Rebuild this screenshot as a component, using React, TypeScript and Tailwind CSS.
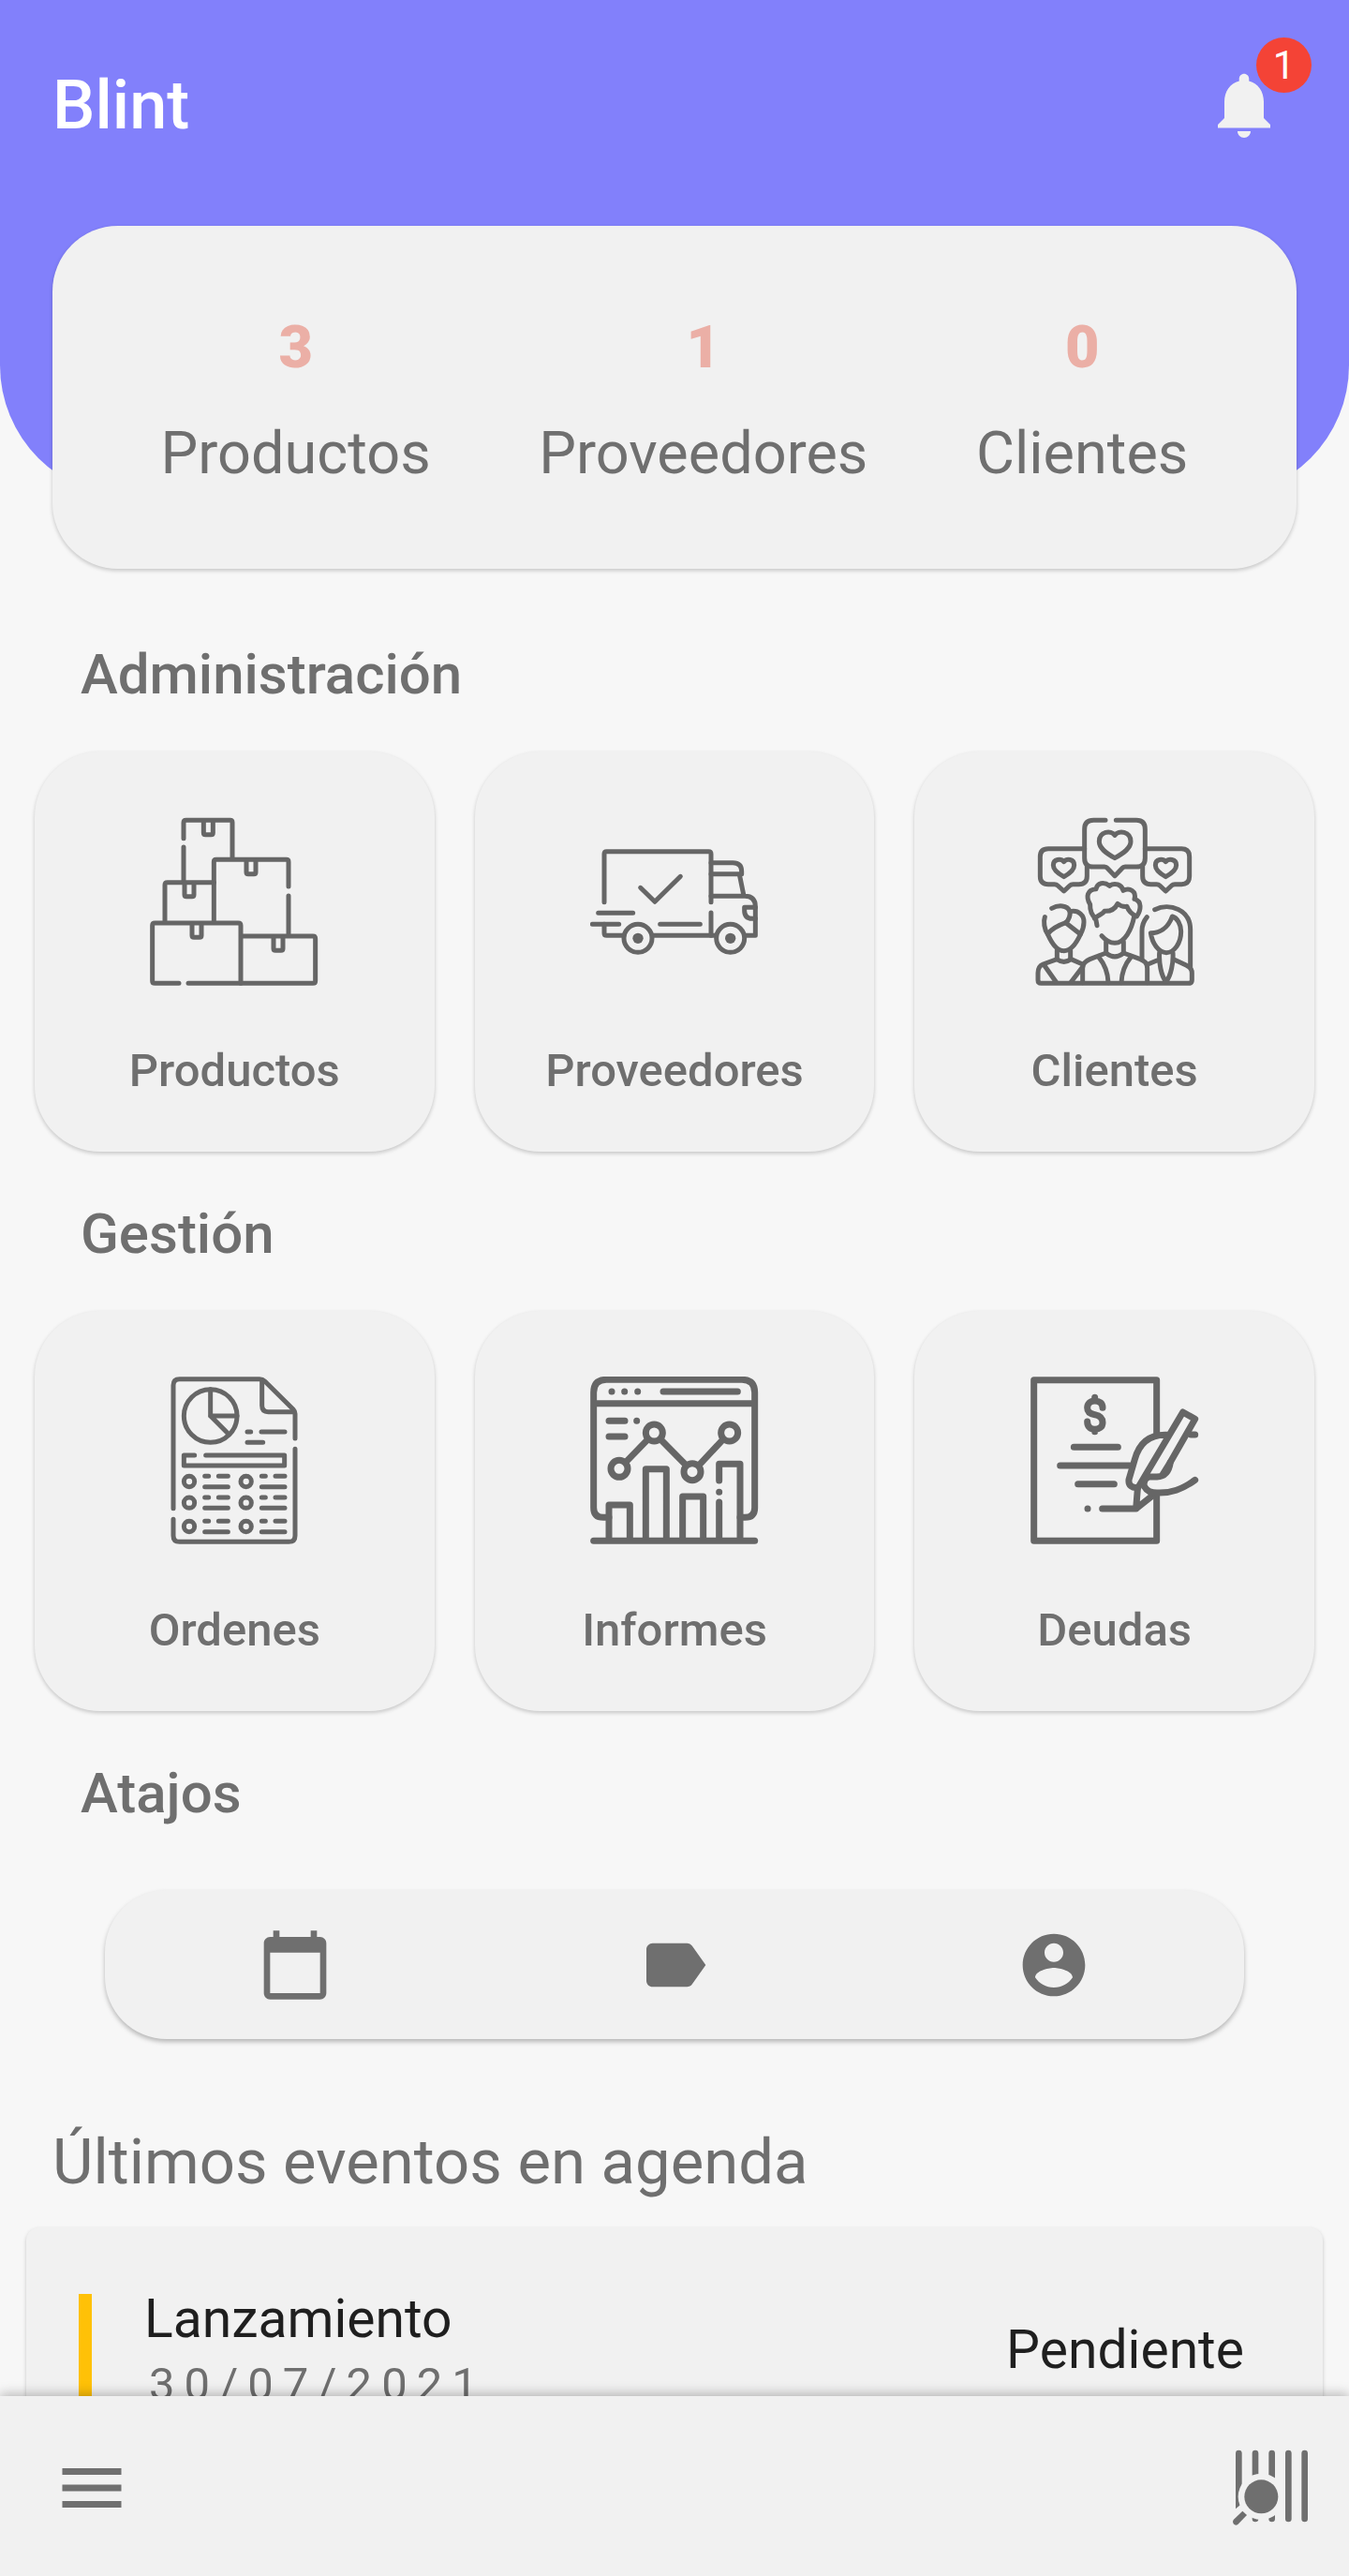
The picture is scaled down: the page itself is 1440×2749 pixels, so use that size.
import type { ReactNode } from "react";

type DrawingProps = { box: string; weight: number; children: ReactNode };

function Drawing({ box, weight, children }: DrawingProps) {
  return (
    <svg
      viewBox={box}
      className="size-[180px]"
      fill="none"
      stroke="#666666"
      strokeWidth={weight}
      strokeLinecap="round"
      strokeLinejoin="round"
      aria-hidden="true"
    >
      {children}
    </svg>
  );
}

function BoxesIcon() {
  return (
    <Drawing box="90 66 540 540" weight={15}>
      <path d="M198 134V84q0-8 8-8h141q7 0 7 7V195M198 162V275" />
      <path d="M295 398V209q0-7 7-7h225q7 0 7 7V288M534 318V440" />
      <path d="M138 398V283q0-8 8-8h149" />
      <path d="M183 598H106q-8 0-8-8V413q0-8 8-8h267q8 0 8 8V598" />
      <path d="M213 598H612q8 0 8-8V455q0-8-8-8H388" />
      <path d="M262 80v36q0 6 6 6h18q6 0 6-6V80" />
      <path d="M399 206v36q0 6 6 6h18q6 0 6-6V206" />
      <path d="M201 279v35q0 6 6 6h18q6 0 6-6V279" />
      <path d="M225 409v36q0 6 6 6h18q6 0 6-6V409" />
      <path d="M486 451v36q0 6 6 6h18q6 0 6-6V451" />
    </Drawing>
  );
}

function TruckIcon() {
  return (
    <Drawing box="60 66 540 540" weight={15}>
      <path d="M105 338V184q0-8 8-8H439q8 0 8 8V338M447 372V445" />
      <path d="M221 292L267 337L349 256" />
      <path d="M86 373H197M67 409H152M284 409H412" />
      <path d="M105 409v28q0 8 8 8h55M262 445H463" />
      <path d="M447 212h70q28 0 28 28v8H447" />
      <path d="M538 250L552 318M447 319h108q34 0 34 34V445H558" />
      <path d="M589 355h-35v10q0 25 25 26h10" />
      <circle cx="213" cy="454" r="45" />
      <circle cx="509" cy="454" r="45" />
      <circle cx="213" cy="454" r="17" fill="#666666" stroke="none" />
      <circle cx="509" cy="454" r="17" fill="#666666" stroke="none" />
    </Drawing>
  );
}

function ClientsIcon() {
  return (
    <Drawing box="60 66 540 540" weight={15}>
      <path d="M300 76H262q-29 0-29 29V197q0 28 28 28h36q6 0 10 5l23 24l23-24q4-5 10-5h36q28 0 28-28V105q0-29-28-29H334" />
      <path d="M233 167H117q-26 0-26 26V255q0 26 26 26h20q6 0 10 4l20 18l19-18q4-4 10-4h19q26 0 26-26V225" />
      <path d="M427 167H544q25 0 25 26V255q0 26-25 26h-22q-6 0-10 4l-19 18l-19-18q-4-4-10-4h-19q-26 0-26-26V225" />
      <path d="M330 197C300 180 280 165 280 144C280 112 318 106 330 124C342 106 381 112 381 144C381 165 360 180 330 197Z" />
      <path d="M167 257C145 245 133 235 133 220C133 199 158 198 167 209C176 198 200 199 200 220C200 235 189 245 167 257Z" />
      <path d="M493 257C471 245 460 235 460 220C460 199 484 198 493 209C502 198 527 199 527 220C527 235 515 245 493 257Z" />
      <path d="M273 413L269 391C259 382 250 365 251 346C236 320 242 298 270 296C274 276 295 272 313 286C330 274 352 282 357 301C378 290 400 304 393 328C417 335 415 362 400 384C382 376 374 366 369 352Q352 354 339 343C332 358 318 368 297 367C290 378 278 378 265 391" />
      <path d="M288 446C302 462 316 469 330 469C362 469 384 425 392 384" />
      <path d="M302 466V501M358 466V501" />
      <path d="M227 596V550C227 534 238 526 250 521L302 501Q330 524 358 501L412 521C425 527 434 532 434 550V596" />
      <path d="M279 515C300 540 308 568 309 596M381 515C360 540 352 568 351 596" />
      <path d="M128 358C150 346 178 348 185 366C190 378 182 396 173 404C150 412 128 424 115 440C104 425 101 400 106 386" />
      <path d="M187 368C215 362 232 382 231 402C231 420 225 432 220 441L173 404" />
      <path d="M115 440C128 470 145 494 167 494C190 494 207 470 220 441" />
      <path d="M145 492V521M188 492V521" />
      <path d="M227 537L190 521Q167 537 145 521L100 537C88 542 84 550 84 565V588q0 10 10 10H567q10 0 10-10V565C577 552 570 545 560 541L520 522" />
      <path d="M106 543L142 594M227 545L190 594" />
      <path d="M458 362C504 340 574 360 572 430V545M433 386C420 402 417 415 417 430V520" />
      <path d="M514 384C500 424 470 437 445 437C450 470 470 500 495 500C520 500 542 470 542 432C542 410 530 388 514 384Z" />
      <path d="M436 537L472 522M473 500C471 530 478 575 494 592C510 575 518 530 516 500" />
    </Drawing>
  );
}

function OrdersIcon() {
  return (
    <Drawing box="90 60 540 540" weight={15}>
      <path d="M165 482V88q0-20 20-20H441q10 0 17 7L549 165q6 6 6 14V258M555 292V569q0 20-20 20H185q-20 0-20-20V517" />
      <path d="M449 72V153q0 20 20 20h82" />
      <circle cx="284" cy="186" r="85" />
      <path d="M284 101V186H369M284 186L343 245" />
      <path d="M402 237H413M447 237H522M402 271H452" />
      <path d="M233 312H199v33H521V312H269" />
      {[396, 464, 540].map((y) =>
        [0, 182].map((x) => (
          <g key={`${x}-${y}`}>
            <circle cx={216 + x} cy={y} r="17" />
            <path d={`M${266 + x} ${y - 17}h12m32 0h30M${266 + x} ${y + 17}h74`} />
          </g>
        )),
      )}
    </Drawing>
  );
}

function ReportsIcon() {
  return (
    <Drawing box="60 60 540 540" weight={21}>
      <path d="M120 511H102q-31 0-31-31V111q0-41 41-41H546q41 0 41 41V480q0 31-31 31H540M71 146H587" />
      <path d="M129 108h.1M170 108h.1M212 108h.1M294 108H532" />
      <path d="M120 202H171M209 202h.1M120 252H171" />
      <circle cx="153" cy="355" r="27" />
      <circle cx="265" cy="240" r="27" />
      <circle cx="387" cy="365" r="27" />
      <circle cx="506" cy="240" r="27" />
      <path d="M176 332L243 263M286 262L366 343M409 343L484 263" />
      <path d="M120 580V471H187V580M238 580V356H304V580M356 580V444H422V580" />
      <path d="M473 393V340H540V580M473 430h.1M473 462V580" />
      <path d="M71 586H587" />
    </Drawing>
  );
}

function DebtsIcon() {
  return (
    <Drawing box="60 60 540 540" weight={21}>
      <path d="M464 240V71H71V586H464V444" />
      <path d="M291 160C291 145 281 138 266 138C251 138 242 147 242 160C242 173 252 180 266 182C281 185 291 193 291 207C291 221 281 229 266 229C251 229 242 220 242 204M266 127V138M266 229V236" />
      <path d="M199 286H340M155 345H378M212 404H328M243 483h.1M290 483H398L452 440M398 483L403 420" />
      <path d="M496 247C440 245 408 275 394 325L375 390C373 408 385 418 405 415L548 174L587 196L508 334" />
      <path d="M437 381H465C494 380 504 362 508 334L482 376" />
      <path d="M437 381C410 400 425 432 465 432C510 434 545 422 587 391M574 246H587" />
    </Drawing>
  );
}

function BarcodeSearchIcon() {
  return (
    <svg viewBox="72 69 252 252" className="size-[84px]" aria-hidden="true">
      <g fill="none" stroke="#6f6f6f" strokeWidth="20" strokeLinecap="round">
        <path d="M150 84V294M203 84V294M256 84V294M308 84V294" />
      </g>
      <path d="M87 84a10 10 0 0 1 20 0V245L87 262Z" fill="#6f6f6f" />
      <circle cx="169" cy="223" r="74" fill="#f1f1f1" />
      <circle cx="169" cy="223" r="54" fill="#6f6f6f" />
      <path d="M109 269L123 282L94 312Q86 317 80 310Q75 304 80 297Z" fill="#6f6f6f" />
    </svg>
  );
}

function MaterialIcon({ path, size }: { path: string; size: string }) {
  return (
    <svg viewBox="0 0 24 24" className={size} fill="currentColor" aria-hidden="true">
      <path d={path} />
    </svg>
  );
}

const BELL =
  "M12 22c1.1 0 2-.9 2-2h-4c0 1.1.89 2 2 2zm6-6v-5c0-3.07-1.64-5.64-4.5-6.32V4c0-.83-.67-1.5-1.5-1.5s-1.5.67-1.5 1.5v.68C7.63 5.36 6 7.92 6 11v5l-2 2v1h16v-1l-2-2z";
const CALENDAR =
  "M20 3h-1V1h-2v2H7V1H5v2H4c-1.1 0-2 .9-2 2v16c0 1.1.9 2 2 2h16c1.1 0 2-.9 2-2V5c0-1.1-.9-2-2-2zm0 18H4V8h16v13z";
const LABEL =
  "M17.63 5.84C17.27 5.33 16.67 5 16 5L5 5.01C3.9 5.01 3 5.9 3 7v10c0 1.1.9 1.99 2 1.99L16 19c.67 0 1.27-.33 1.63-.84L22 12l-4.37-6.16z";
const ACCOUNT =
  "M12 2C6.48 2 2 6.48 2 12s4.48 10 10 10 10-4.48 10-10S17.52 2 12 2zm0 3c1.66 0 3 1.34 3 3s-1.34 3-3 3-3-1.34-3-3 1.34-3 3-3zm0 14.2c-2.5 0-4.71-1.28-6-3.22.03-1.99 4-3.08 6-3.08 1.99 0 5.97 1.09 6 3.08-1.29 1.94-3.5 3.22-6 3.22z";
const MENU = "M3 18h18v-2H3v2zm0-5h18v-2H3v2zm0-7v2h18V6H3z";

const stats = [
  { value: 3, label: "Productos" },
  { value: 1, label: "Proveedores" },
  { value: 0, label: "Clientes" },
];

const sections = [
  {
    title: "Administración",
    tiles: [
      { label: "Productos", icon: <BoxesIcon /> },
      { label: "Proveedores", icon: <TruckIcon /> },
      { label: "Clientes", icon: <ClientsIcon /> },
    ],
  },
  {
    title: "Gestión",
    tiles: [
      { label: "Ordenes", icon: <OrdersIcon /> },
      { label: "Informes", icon: <ReportsIcon /> },
      { label: "Deudas", icon: <DebtsIcon /> },
    ],
  },
];

const shortcuts = [
  { label: "Calendario", path: CALENDAR },
  { label: "Etiquetas", path: LABEL },
  { label: "Cuenta", path: ACCOUNT },
];

function SectionTitle({ children }: { children: ReactNode }) {
  return <h2 className="px-[86px] text-[60px] leading-[66px] font-medium">{children}</h2>;
}

export default function App() {
  return (
    <div className="flex h-screen flex-col overflow-hidden bg-[#f7f7f7] font-['Roboto',sans-serif] text-[#6f6f6f]">
      <main className="min-h-0 flex-1 overflow-y-auto [scrollbar-width:none]">
        <header className="h-[530px] rounded-b-[140px] bg-[#8280fb]">
          <div className="flex h-[241px] items-start justify-between pt-[70px] pr-[70px] pl-[56px]">
            <h1 className="text-[72px] leading-[86px] font-medium text-white">Blint</h1>
            <button type="button" aria-label="Notificaciones" className="relative text-[#f1f1f1]">
              <MaterialIcon path={BELL} size="size-[84px]" />
              <span className="absolute -top-[30px] -right-[30px] flex size-[59px] items-center justify-center rounded-full bg-[#f44336] text-[42px] leading-none text-white">
                1
              </span>
            </button>
          </div>
          <dl className="mx-[56px] flex h-[366px] justify-evenly rounded-[70px] bg-[#f1f1f1] pt-[93px] shadow-[0_2px_4px_rgba(0,0,0,0.2)]">
            {stats.map((s) => (
              <div key={s.label} className="flex flex-col-reverse justify-end gap-[39px] text-center text-[63px] leading-[74px]">
                <dt>{s.label}</dt>
                <dd className="font-black text-[#ebafa6]">{s.value}</dd>
              </div>
            ))}
          </dl>
        </header>

        <div className="mt-[157px] flex flex-col gap-[55px]">
          {sections.map((section) => (
            <section key={section.title}>
              <SectionTitle>{section.title}</SectionTitle>
              <div className="mt-[49px] grid grid-cols-3 gap-[43px] px-[37px]">
                {section.tiles.map((tile) => (
                  <button
                    key={tile.label}
                    type="button"
                    className="flex h-[427px] flex-col items-center rounded-[70px] bg-[#f1f1f1] pt-[70px] text-[49px] leading-[58px] font-medium shadow-[0_2px_4px_rgba(0,0,0,0.2)]"
                  >
                    {tile.icon}
                    <span className="mt-[62px]">{tile.label}</span>
                  </button>
                ))}
              </div>
            </section>
          ))}
          <section>
            <SectionTitle>Atajos</SectionTitle>
            <div className="mx-[112px] mt-[70px] grid h-[159px] grid-cols-3 rounded-[66px] bg-[#f1f1f1] shadow-[0_3px_5px_rgba(0,0,0,0.26)]">
              {shortcuts.map((s) => (
                <button key={s.label} type="button" aria-label={s.label} className="flex items-center justify-center">
                  <MaterialIcon path={s.path} size="size-20" />
                </button>
              ))}
            </div>
          </section>
        </div>

        <section className="mt-[92px] pb-10">
          <h2 className="px-[56px] text-[67px] leading-[78px]">Últimos eventos en agenda</h2>
          <article className="mx-[28px] mt-[31px] flex items-stretch rounded-[14px] bg-[#f1f1f1] px-[56px] py-[71px] shadow-[0_2px_4px_rgba(0,0,0,0.2)]">
            <div className="w-[14px] bg-[#ffc107]" />
            <div className="ml-[56px] flex-1 pb-5">
              <h3 className="text-[57px] leading-[54px] text-[#1f1f1f]">Lanzamiento</h3>
              <p className="mt-[14px] pl-[5px] text-[49px] leading-[58px] tracking-[10px]">30/07/2021</p>
            </div>
            <p className="mr-[28px] pt-[27px] text-[57px] leading-[66px] text-[#1f1f1f]">Pendiente</p>
          </article>
        </section>
      </main>

      <nav
        aria-label="Principal"
        className="relative flex h-[192px] items-center justify-between bg-[#f1f1f1] pt-1 pr-[42px] pl-[56px] shadow-[0_-2px_12px_rgba(0,0,0,0.28)]"
      >
        <button type="button" aria-label="Menú">
          <MaterialIcon path={MENU} size="size-[84px]" />
        </button>
        <button type="button" aria-label="Buscar código de barras">
          <BarcodeSearchIcon />
        </button>
      </nav>
    </div>
  );
}
